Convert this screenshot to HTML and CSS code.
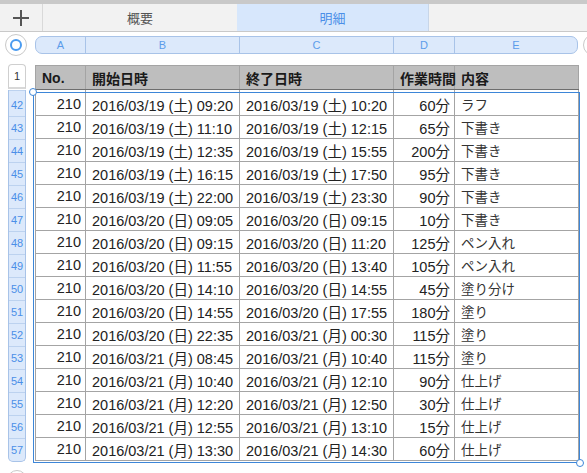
FILE: index.html
```html
<!DOCTYPE html>
<html lang="ja">
<head>
<meta charset="utf-8">
<title>明細</title>
<link rel="stylesheet" href="styles.css">
</head>
<body>
<div class="topband"></div>
<div class="tabs">
  <div class="plus"><svg width="18" height="18" viewBox="0 0 18 18"><path d="M9 1v16M1 9h16" stroke="#555" stroke-width="2"/></svg></div>
  <div class="tab t1">概要</div>
  <div class="tab active">明細</div>
  <div class="tab rest"></div>
</div>
<div class="colbar">
  <div class="selall"><span class="ring"></span></div>
  <div class="pills">
    <div class="pill ca">A</div>
    <div class="pill cb">B</div>
    <div class="pill cc">C</div>
    <div class="pill cd">D</div>
    <div class="pill ce">E</div>
  </div>
  <div class="selall right"></div>
</div>
<div class="sheet">
  <div class="rowheads">
    <div class="rh1">1</div>
    <div class="rhbody">
      <div>42</div><div>43</div><div>44</div><div>45</div><div>46</div><div>47</div><div>48</div><div>49</div>
      <div>50</div><div>51</div><div>52</div><div>53</div><div>54</div><div>55</div><div>56</div><div>57</div>
    </div>
    <div class="addrow"></div>
  </div>
  <div class="tablewrap">
    <table class="grid">
      <colgroup><col class="wa"><col class="wb"><col class="wc"><col class="wd"><col class="we"></colgroup>
      <thead>
        <tr><th class="l">No.</th><th>開始日時</th><th>終了日時</th><th>作業時間</th><th>内容</th></tr>
      </thead>
      <tbody>
        <tr class="spacer"><td></td><td></td><td></td><td></td><td></td></tr>
        <tr><td class="n">210</td><td>2016/03/19 (土) 09:20</td><td>2016/03/19 (土) 10:20</td><td class="n">60分</td><td class="t">ラフ</td></tr>
        <tr><td class="n">210</td><td>2016/03/19 (土) 11:10</td><td>2016/03/19 (土) 12:15</td><td class="n">65分</td><td class="t">下書き</td></tr>
        <tr><td class="n">210</td><td>2016/03/19 (土) 12:35</td><td>2016/03/19 (土) 15:55</td><td class="n">200分</td><td class="t">下書き</td></tr>
        <tr><td class="n">210</td><td>2016/03/19 (土) 16:15</td><td>2016/03/19 (土) 17:50</td><td class="n">95分</td><td class="t">下書き</td></tr>
        <tr><td class="n">210</td><td>2016/03/19 (土) 22:00</td><td>2016/03/19 (土) 23:30</td><td class="n">90分</td><td class="t">下書き</td></tr>
        <tr><td class="n">210</td><td>2016/03/20 (日) 09:05</td><td>2016/03/20 (日) 09:15</td><td class="n">10分</td><td class="t">下書き</td></tr>
        <tr><td class="n">210</td><td>2016/03/20 (日) 09:15</td><td>2016/03/20 (日) 11:20</td><td class="n">125分</td><td class="t">ペン入れ</td></tr>
        <tr><td class="n">210</td><td>2016/03/20 (日) 11:55</td><td>2016/03/20 (日) 13:40</td><td class="n">105分</td><td class="t">ペン入れ</td></tr>
        <tr><td class="n">210</td><td>2016/03/20 (日) 14:10</td><td>2016/03/20 (日) 14:55</td><td class="n">45分</td><td class="t">塗り分け</td></tr>
        <tr><td class="n">210</td><td>2016/03/20 (日) 14:55</td><td>2016/03/20 (日) 17:55</td><td class="n">180分</td><td class="t">塗り</td></tr>
        <tr><td class="n">210</td><td>2016/03/20 (日) 22:35</td><td>2016/03/21 (月) 00:30</td><td class="n">115分</td><td class="t">塗り</td></tr>
        <tr><td class="n">210</td><td>2016/03/21 (月) 08:45</td><td>2016/03/21 (月) 10:40</td><td class="n">115分</td><td class="t">塗り</td></tr>
        <tr><td class="n">210</td><td>2016/03/21 (月) 10:40</td><td>2016/03/21 (月) 12:10</td><td class="n">90分</td><td class="t">仕上げ</td></tr>
        <tr><td class="n">210</td><td>2016/03/21 (月) 12:20</td><td>2016/03/21 (月) 12:50</td><td class="n">30分</td><td class="t">仕上げ</td></tr>
        <tr><td class="n">210</td><td>2016/03/21 (月) 12:55</td><td>2016/03/21 (月) 13:10</td><td class="n">15分</td><td class="t">仕上げ</td></tr>
        <tr><td class="n">210</td><td>2016/03/21 (月) 13:30</td><td>2016/03/21 (月) 14:30</td><td class="n">60分</td><td class="t">仕上げ</td></tr>
      </tbody>
    </table>
    <div class="selection"><span class="handle tl"></span><span class="handle br"></span></div>
  </div>
</div>
</body>
</html>
```
FILE: styles.css
```css
html, body {
  margin: 0;
  padding: 0;
  background: #fff;
  width: 587px;
  height: 473px;
  overflow: hidden;
  font-family: "Liberation Sans", "Noto Sans CJK JP", sans-serif;
  color: #222;
}
.topband {
  height: 4px;
  background: #c9c9c9;
}
.tabs {
  display: flex;
  height: 27px;
  background: #f2f2f2;
  border-bottom: 1px solid #c9c9c9;
}
.plus {
  width: 43px;
  display: flex;
  align-items: center;
  justify-content: center;
  border-right: 1px solid #d9d9d9;
  box-sizing: border-box;
}
.tab {
  display: flex;
  align-items: center;
  justify-content: center;
  font-size: 13px;
  color: #555;
  box-sizing: border-box;
}
.t1 { width: 194px; }
.tab.active {
  width: 192px;
  background: #d7e7fc;
  color: #4b8fe8;
  border-right: 1px solid #c8d6e8;
}
.tab.rest { flex: 1; }
.colbar {
  display: flex;
  align-items: center;
  height: 22px;
  padding-top: 2px;
}
.selall {
  width: 22px;
  height: 22px;
  box-sizing: border-box;
  border: 1px solid #c9c9c9;
  border-radius: 50%;
  background: #fff;
  margin-left: 5px;
  display: flex;
  align-items: center;
  justify-content: center;
  flex: none;
}
.ring {
  width: 12px;
  height: 12px;
  box-sizing: border-box;
  border: 2px solid #4a9bf0;
  border-radius: 50%;
}
.pills {
  display: flex;
  flex: none;
  margin-left: 8px;
  height: 18px;
  box-sizing: border-box;
  border: 1px solid #a8c3e8;
  border-radius: 7px;
  background: #dce9fb;
  overflow: hidden;
}
.pill {
  font-size: 11px;
  color: #5b9cea;
  display: flex;
  align-items: center;
  justify-content: center;
  box-sizing: border-box;
  border-right: 1px solid #a8c3e8;
  flex: none;
}
.pill.ce { border-right: none; }
.ca { width: 50px; }
.cb { width: 154px; }
.cc { width: 154px; }
.cd { width: 61px; }
.ce { width: 122px; }
.sheet {
  display: flex;
  margin-top: 9px;
}
.rowheads {
  width: 18px;
  margin-left: 8px;
  display: flex;
  flex-direction: column;
  flex: none;
}
.rh1 {
  height: 25px;
  box-sizing: border-box;
  border: 1px solid #cfcfcf;
  border-bottom: 2px solid #d8d8d8;
  border-radius: 4px 4px 0 0;
  font-size: 11px;
  color: #333;
  display: flex;
  align-items: center;
  justify-content: center;
  margin-top: -1px;
}
.rhbody {
  margin-top: 1px;
  border: 1px solid #a8c3e8;
  border-top: none;
  border-radius: 0 0 5px 5px;
  background: #dce9fb;
  overflow: hidden;
}
.rhbody div {
  height: 23px;
  box-sizing: border-box;
  border-top: 1px solid #bcd2ef;
  font-size: 11px;
  color: #4b8fe8;
  display: flex;
  align-items: center;
  justify-content: center;
}
.rhbody div:first-child { height: 26px; padding-top: 3px; }
.addrow {
  width: 20px;
  height: 20px;
  margin-left: -1px;
  margin-top: 8px;
  box-sizing: border-box;
  border: 1px solid #c9c9c9;
  border-radius: 50%;
}
.tablewrap {
  position: relative;
  margin-left: 9px;
}
.grid {
  border-collapse: collapse;
  table-layout: fixed;
  width: 543px;
  font-size: 14.5px;
}
.wa { width: 50px; }
.wb { width: 154px; }
.wc { width: 154px; }
.wd { width: 61px; }
.we { width: 124px; }
.grid th {
  height: 23px;
  background: #bebebe;
  text-align: left;
  font-weight: bold;
  font-size: 14px;
  padding: 0 6px;
  border: 1px solid #a4a4a4;
  border-bottom: 1px solid #6e6e6e;
  color: #1a1a1a;
  white-space: nowrap;
}
.grid th:nth-child(4) { text-align: right; padding-right: 4px; }
.grid td {
  height: 22px;
  padding: 0 6px;
  border: 1px solid #a4a4a4;
  white-space: nowrap;
  overflow: hidden;
}
.grid td.n { text-align: right; padding-right: 4px; }
.grid td.t { font-size: 13.5px; color: #333; }
.grid tr.spacer td {
  height: 2px;
  padding: 0;
  border-top: none;
  border-bottom: none;
}
.selection {
  position: absolute;
  left: -2px;
  top: 27px;
  width: 547px;
  height: 371px;
  box-sizing: border-box;
  border: 1.5px solid #3d86d8;
  pointer-events: none;
}
.handle {
  position: absolute;
  width: 8px;
  height: 8px;
  box-sizing: border-box;
  border: 1.5px solid #3d86d8;
  border-radius: 50%;
  background: #fff;
}
.handle.tl { left: -5px; top: -5px; }
.handle.br { right: -5px; bottom: -5px; }
```
